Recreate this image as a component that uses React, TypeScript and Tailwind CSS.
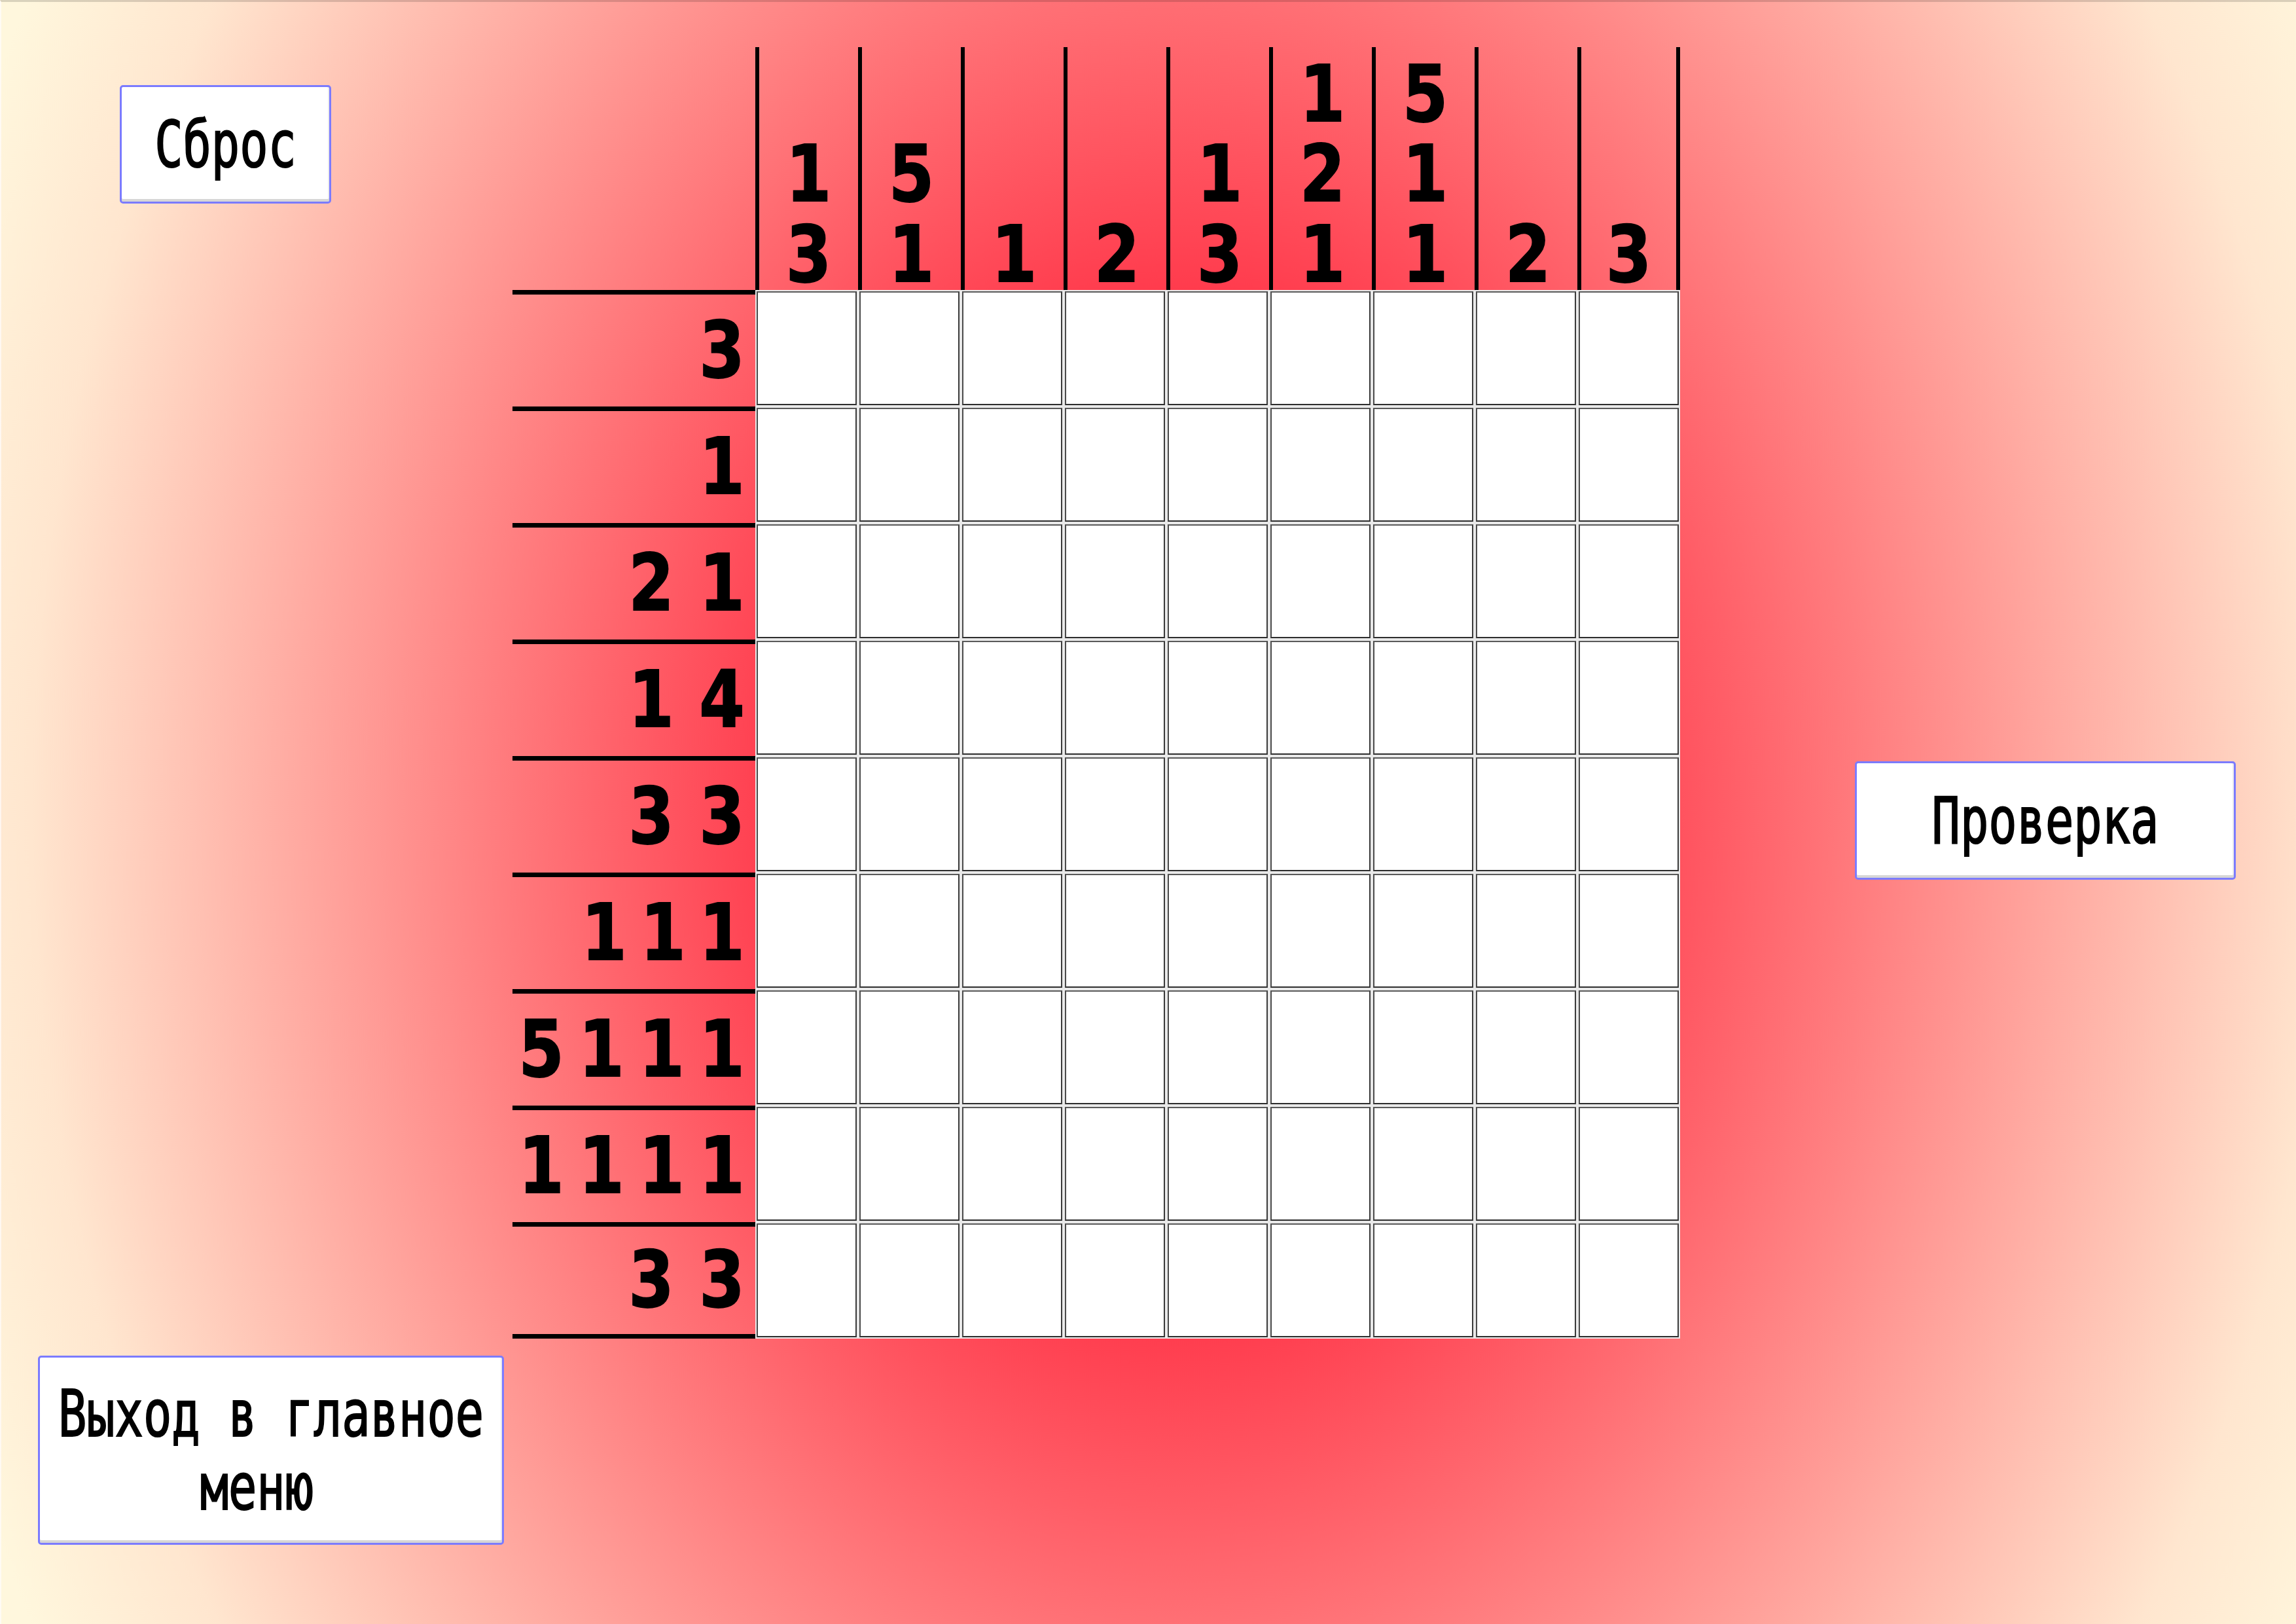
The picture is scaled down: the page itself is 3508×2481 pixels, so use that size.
import React from 'react';

const colClues = [[1, 3], [5, 1], [1], [2], [1, 3], [1, 2, 1], [5, 1, 1], [2], [3]];
const rowClues = [[3], [1], [2, 1], [1, 4], [3, 3], [1, 1, 1], [5, 1, 1, 1], [1, 1, 1, 1], [3, 3]];

const rowGap: Record<number, string> = {
  1: 'gap-0',
  2: 'gap-[38px]',
  3: 'gap-[20px]',
  4: 'gap-[22px]',
};

const QtButton = ({ className, children }: { className: string; children: React.ReactNode }) => (
  <div
    className={`flex flex-col items-center justify-center bg-white border-[3px] border-[#7b7bff] rounded-[5px] shadow-[inset_0_-4px_0_#d6d6d6,inset_-2px_0_0_#ececec] font-['DejaVu_Sans_Mono',monospace] text-[72px] text-black [-webkit-text-stroke:1.5px_#000] ${className}`}
  >
    {children}
  </div>
);

const RowDigit = ({ n }: { n: number }) => (
  <span className="block w-[70px] h-[100px] text-center leading-[100px] text-[100px] font-bold scale-y-[1.19] [-webkit-text-stroke:1.5px_#000]">
    {n}
  </span>
);

export default function App() {
  return (
    <div className="w-[3508px] h-[2481px] flex overflow-hidden border-t-[3px] border-t-black/15 border-l-2 border-l-white/70 bg-[radial-gradient(ellipse_2000px_2600px_at_1800px_1230px,#ff3446_0px,#ff3a4c_600px,#ffe6cf_1754px,#fff7dd_2000px)]">
      {/* left side: reset + exit */}
      <div className="w-[781px] flex flex-col items-start">
        <QtButton className="ml-[181px] mt-[127px] w-[323px] h-[181px]">
          <span className="inline-block scale-y-[1.35]">Сброс</span>
        </QtButton>
        <QtButton className="ml-[56px] mt-auto mb-[121px] w-[712px] h-[289px] leading-[112px]">
          <span className="inline-block scale-y-[1.35]">Выход в главное</span>
          <span className="inline-block scale-y-[1.35]">меню{'\u00a0'}</span>
        </QtButton>
      </div>

      {/* puzzle */}
      <div className="pt-[69px] font-['DejaVu_Sans','Liberation_Sans',sans-serif] text-black">
        <div className="grid grid-cols-[371px_repeat(9,157px)] grid-rows-[371px_repeat(9,178px)]">
          <div />
          {colClues.map((clue, i) => (
            <div
              key={'c' + i}
              className={`flex flex-col items-center justify-end border-l-[6px] border-black ${i === colClues.length - 1 ? 'border-r-[6px]' : ''}`}
            >
              <span className="block -mb-[7px] whitespace-pre-line text-center leading-[103px] text-[100px] font-bold origin-bottom scale-y-[1.19] [-webkit-text-stroke:1.5px_#000]">
                {clue.join('\n')}
              </span>
            </div>
          ))}
          {rowClues.map((clue, r) => (
            <React.Fragment key={'r' + r}>
              <div
                className={`flex items-center justify-end pr-[16px] border-t-[7px] border-black ${rowGap[clue.length]} ${r === rowClues.length - 1 ? 'border-b-[7px]' : ''}`}
              >
                {clue.map((n, j) => (
                  <RowDigit key={j} n={n} />
                ))}
              </div>
              {colClues.map((_, c) => (
                <div key={c} className="border-2 border-[#e9e9e9]">
                  <div className="h-full border-2 border-t-[#5a5a5a] border-l-[#4a4a4a] border-r-[#3a3a3a] border-b-[#2e2e2e] bg-white" />
                </div>
              ))}
            </React.Fragment>
          ))}
        </div>
      </div>

      {/* right side: check */}
      <div className="flex-1 pl-[267px] pt-[1160px]">
        <QtButton className="w-[582px] h-[181px]">
          <span className="inline-block scale-y-[1.35]">Проверка</span>
        </QtButton>
      </div>
    </div>
  );
}
